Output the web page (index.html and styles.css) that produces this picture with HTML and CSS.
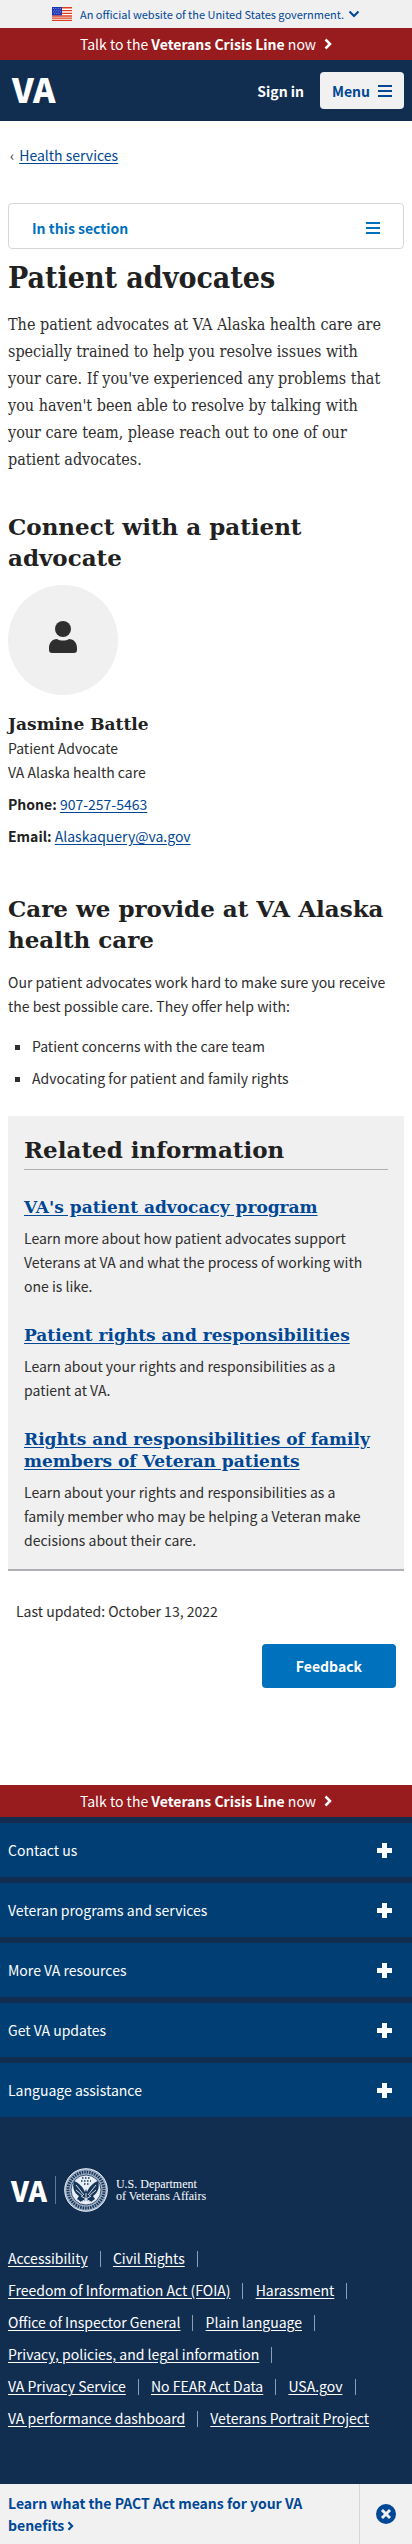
FILE: index.html
```html
<!DOCTYPE html>
<html lang="en">
<head>
<meta charset="utf-8">
<meta name="viewport" content="width=device-width, initial-scale=1">
<title>Patient advocates | VA Alaska health care</title>
<link rel="stylesheet" href="styles.css">
</head>
<body>
<header>
  <button class="gov-banner" type="button">
    <svg class="flag" viewBox="0 0 20 14" aria-hidden="true">
      <path fill="#fff" d="M0 0h20v14H0z"/>
      <path fill="#db3e1f" d="M0 0h20v1.5H0zM0 3h20v1.3H0zM0 5.7h20v1.4H0zM0 8.3h20v1.4H0zM0 10.6h20v1.2H0zM0 12.8h20V14H0z"/>
      <path fill="#1e33b1" d="M0 0h10v8.300H0z"/>
      <path stroke="#a5b0e8" stroke-width=".8" stroke-dasharray="1 1.300" d="M1 1.500h8M2 3.200h7M1 4.900h8M2 6.600h7"/>
    </svg>
    <span>An official website of the United States government.</span>
    <svg class="chevron-down" viewBox="0 0 12 8" aria-hidden="true"><path fill="none" stroke="currentColor" stroke-width="2" d="M1.500 1.500L6 6l4.500-4.500"/></svg>
  </button>
  <a class="crisis-line" href="#crisis">
    <span>Talk to the <strong>Veterans Crisis Line</strong> now</span>
    <svg class="chevron-right" viewBox="0 0 8 12" aria-hidden="true"><path fill="none" stroke="currentColor" stroke-width="2.500" d="M1.500 1.500L6 6l-4.500 4.500"/></svg>
  </a>
  <div class="site-header">
    <a class="logo" href="#home">VA</a>
    <button class="sign-in" type="button">Sign in</button>
    <button class="menu-button" type="button">
      <span>Menu</span>
      <svg class="bars" viewBox="0 0 14 12" aria-hidden="true"><path fill="currentColor" d="M0 0h14v2H0zM0 5h14v2H0zM0 10h14v2H0z"/></svg>
    </button>
  </div>
</header>

<main class="content">
  <nav class="breadcrumb" aria-label="Breadcrumb"><span class="breadcrumb-mark">‹</span><a href="#health-services">Health services</a></nav>
  <button class="section-nav" type="button">
    <span>In this section</span>
    <svg class="bars" viewBox="0 0 14 12" aria-hidden="true"><path fill="currentColor" d="M0 0h14v2H0zM0 5h14v2H0zM0 10h14v2H0z"/></svg>
  </button>

  <h1>Patient advocates</h1>
  <p class="intro">The patient advocates at VA Alaska health care are specially trained to help you resolve issues with your care. If you've experienced any problems that you haven't been able to resolve by talking with your care team, please reach out to one of our patient advocates.</p>

  <section class="contact">
    <h2>Connect with a patient advocate</h2>
    <div class="avatar">
      <svg class="person" viewBox="0 0 28 32" aria-hidden="true"><circle cx="14" cy="8" r="8" fill="currentColor"/><path fill="currentColor" d="M8 18c3 2 9 2 12 0 5 0 8 4 8 9v2q0 3-3 3H3q-3 0-3-3v-2c0-5 3-9 8-9z"/></svg>
    </div>
    <h3>Jasmine Battle</h3>
    <p>Patient Advocate</p>
    <p>VA Alaska health care</p>
    <p class="contact-row"><strong>Phone:</strong> <a href="tel:9072575463">907-257-5463</a></p>
    <p class="contact-row"><strong>Email:</strong> <a href="mailto:Alaskaquery@va.gov">Alaskaquery@va.gov</a></p>
  </section>

  <section class="care">
    <h2>Care we provide at VA Alaska health care</h2>
    <p>Our patient advocates work hard to make sure you receive the best possible care. They offer help with:</p>
    <ul>
      <li>Patient concerns with the care team</li>
      <li>Advocating for patient and family rights</li>
    </ul>
  </section>

  <section class="related">
    <h2>Related information</h2>
    <h3><a href="#program">VA's patient advocacy program</a></h3>
    <p>Learn more about how patient advocates support Veterans at VA and what the process of working with one is like.</p>
    <h3><a href="#rights">Patient rights and responsibilities</a></h3>
    <p>Learn about your rights and responsibilities as a patient at VA.</p>
    <h3><a href="#family">Rights and responsibilities of family members of Veteran patients</a></h3>
    <p>Learn about your rights and responsibilities as a family member who may be helping a Veteran make decisions about their care.</p>
  </section>

  <div class="page-end">
    <p>Last updated: October 13, 2022</p>
    <button class="feedback" type="button">Feedback</button>
  </div>
</main>

<footer>
  <a class="crisis-line" href="#crisis">
    <span>Talk to the <strong>Veterans Crisis Line</strong> now</span>
    <svg class="chevron-right" viewBox="0 0 8 12" aria-hidden="true"><path fill="none" stroke="currentColor" stroke-width="2.500" d="M1.500 1.500L6 6l-4.500 4.500"/></svg>
  </a>
  <div class="accordion">
    <button type="button"><span>Contact us</span><svg class="plus" viewBox="0 0 15 15" aria-hidden="true"><path fill="currentColor" d="M5 0h5v5h5v5h-5v5H5v-5H0V5h5z"/></svg></button>
    <button type="button"><span>Veteran programs and services</span><svg class="plus" viewBox="0 0 15 15" aria-hidden="true"><path fill="currentColor" d="M5 0h5v5h5v5h-5v5H5v-5H0V5h5z"/></svg></button>
    <button type="button"><span>More VA resources</span><svg class="plus" viewBox="0 0 15 15" aria-hidden="true"><path fill="currentColor" d="M5 0h5v5h5v5h-5v5H5v-5H0V5h5z"/></svg></button>
    <button type="button"><span>Get VA updates</span><svg class="plus" viewBox="0 0 15 15" aria-hidden="true"><path fill="currentColor" d="M5 0h5v5h5v5h-5v5H5v-5H0V5h5z"/></svg></button>
    <button type="button"><span>Language assistance</span><svg class="plus" viewBox="0 0 15 15" aria-hidden="true"><path fill="currentColor" d="M5 0h5v5h5v5h-5v5H5v-5H0V5h5z"/></svg></button>
  </div>
  <a class="footer-logo" href="#home">
    <span class="footer-mark">VA</span>
    <svg class="seal" viewBox="0 0 44 44" aria-hidden="true">
      <circle cx="22" cy="22" r="21.300" fill="#9eafc5" stroke="#e6edf5"/>
      <circle cx="22" cy="22" r="18" fill="none" stroke="#173559" stroke-width="3" stroke-dasharray="1.500 1"/>
      <circle cx="22" cy="22" r="15" fill="#e8eef5" stroke="#173559" stroke-width=".8"/>
      <path fill="#173559" d="M10 13c5 2 9 6 11 11l1-3 1 3c2-5 6-9 11-11 2 6 0 12-5 15l2 3-4 3-5-2-5 2-4-3 2-3c-5-3-7-9-5-15z"/>
      <path fill="none" stroke="#e8eef5" stroke-width=".9" d="M12 17l8 10M12 22l7 6M32 17l-8 10M32 22l-7 6M22 25v10M17 34l10-6M27 34l-10-6"/>
      <path fill="none" stroke="#173559" stroke-width="1.300" stroke-dasharray="1.500 1.500" d="M18 10h8M17 13h10M20 16h5"/>
    </svg>
    <span class="department">U.S. Department<br>of Veterans Affairs</span>
  </a>
  <ul class="footer-links">
    <li><a href="#accessibility">Accessibility</a></li>
    <li><a href="#civil">Civil Rights</a></li>
    <li><a href="#foia">Freedom of Information Act (FOIA)</a></li>
    <li><a href="#harassment">Harassment</a></li>
    <li><a href="#oig">Office of Inspector General</a></li>
    <li><a href="#plain">Plain language</a></li>
    <li><a href="#privacy">Privacy, policies, and legal information</a></li>
    <li><a href="#service">VA Privacy Service</a></li>
    <li><a href="#nofear">No FEAR Act Data</a></li>
    <li><a href="#usa">USA.gov</a></li>
    <li><a href="#performance">VA performance dashboard</a></li>
    <li><a href="#portrait">Veterans Portrait Project</a></li>
  </ul>
</footer>

<aside class="promo">
  <a href="#pact">Learn what the PACT Act means for your VA benefits <svg class="promo-chevron" viewBox="0 0 8 12" aria-hidden="true"><path fill="none" stroke="currentColor" stroke-width="2.500" d="M1.500 1.500L6 6l-4.500 4.500"/></svg></a>
  <button type="button" aria-label="Dismiss this announcement">
    <svg class="close" viewBox="0 0 20 20" aria-hidden="true"><circle cx="10" cy="10" r="10" fill="currentColor"/><path stroke="#f1f1f1" stroke-width="3" d="M6 6l8 8M14 6l-8 8"/></svg>
  </button>
</aside>
</body>
</html>
```

FILE: styles.css
```css
* { box-sizing: border-box; }

body {
  margin: 0;
  background: #fff;
  color: #2e2e2e;
  font: 14px/24px "Noto Sans CJK SC", "Noto Sans", sans-serif;
}

h1, h2, h3, p, ul { margin: 0; padding: 0; }

h1, h2, h3 { color: #212121; font-family: "DejaVu Serif", serif; }
h1, .intro { font-family: "DejaVu Serif Condensed", "DejaVu Serif", serif; }
h1 { margin-top: 11px; font-size: 30px; line-height: 36px; }
h2 { font-size: 23px; line-height: 31px; }
h3 { font-size: 17px; line-height: 22px; }

a { color: #004795; text-underline-offset: 2px; }
strong { color: #212121; }
button { margin: 0; padding: 0; border: 0; font: inherit; cursor: pointer; }
svg { display: block; flex: none; }

.gov-banner {
  display: flex;
  align-items: center;
  justify-content: center;
  width: 100%;
  height: 28px;
  background: #f0f0f0;
  color: #004795;
  font-size: 11px;
}
.flag { width: 20px; height: 14px; margin-right: 8px; }
.chevron-down { width: 12px; height: 8px; margin-left: 4px; }

.crisis-line {
  display: flex;
  align-items: center;
  justify-content: center;
  gap: 8px;
  height: 32px;
  background: #981b1e;
  color: #fff;
  text-decoration: none;
}
.crisis-line strong { color: #fff; }
.chevron-right { width: 8px; height: 12px; }

.site-header {
  display: flex;
  align-items: center;
  height: 61px;
  padding: 0 8px 0 12px;
  background: #112e51;
}
.logo {
  margin-right: auto;
  padding-bottom: 4px;
  color: #fff;
  font-size: 34px;
  font-weight: 900;
  line-height: 40px;
  text-decoration: none;
}
.sign-in { margin-right: 16px; background: none; color: #fff; font-weight: 700; }
.menu-button {
  display: flex;
  align-items: center;
  gap: 8px;
  height: 37px;
  padding: 0 12px;
  border-radius: 4px;
  background: #f1f1f1;
  color: #004795;
  font-weight: 700;
}
.bars { width: 14px; height: 12px; }

.content { padding: 22px 8px 97px; }
.breadcrumb { padding-left: 2px; }
.breadcrumb-mark { margin-right: 5px; }

.section-nav {
  display: flex;
  align-items: center;
  justify-content: space-between;
  width: 100%;
  height: 46px;
  margin-top: 36px;
  padding: 4px 23px 0;
  border: 1px solid #d6d7d9;
  border-radius: 4px;
  background: #fff;
  color: #0071bc;
  font-weight: 700;
}

.intro { margin-top: 15px; padding-right: 12px; font-size: 16px; line-height: 27px; }

.contact { margin-top: 38px; }
.avatar {
  display: flex;
  align-items: center;
  justify-content: center;
  width: 110px;
  height: 110px;
  margin: 12px 0 17px;
  padding-bottom: 6px;
  border-radius: 50%;
  background: #f0f0f0;
}
.person { width: 28px; height: 32px; }
.contact h3 { line-height: 24px; }
.contact-row { margin-top: 8px; }

.care { margin-top: 45px; }
.care p { margin-top: 15px; }
.care ul {
  display: grid;
  gap: 8px;
  margin-top: 16px;
  padding-left: 24px;
  list-style: square;
}

.related {
  margin-top: 26px;
  padding: 18px 16px 17px;
  border-bottom: 2px solid #aeb0b5;
  background: #f0f0f0;
}
.related h2 { padding-bottom: 4px; border-bottom: 1px solid #aeb0b5; }
.related h3 { margin-top: 26px; }
.related p { margin-top: 8px; padding-right: 12px; }

.page-end {
  display: flex;
  flex-direction: column;
  align-items: flex-start;
  gap: 21px;
  padding: 28px 8px 0;
}
.feedback {
  align-self: flex-end;
  height: 44px;
  padding: 0 34px;
  border-radius: 4px;
  background: #0071bc;
  color: #fff;
  font-weight: 700;
}

footer { padding-bottom: 50px; background: #112e51; }
.accordion { display: grid; gap: 6px; padding-top: 6px; }
.accordion button {
  display: flex;
  align-items: center;
  justify-content: space-between;
  height: 54px;
  padding: 0 20px 0 8px;
  background: #003e73;
  color: #fff;
}
.plus { width: 15px; height: 15px; }

.footer-logo {
  display: flex;
  align-items: center;
  margin: 51px 8px 30px;
  padding-left: 3px;
  color: #fff;
  text-decoration: none;
}
.footer-mark {
  padding-right: 8px;
  border-right: 1px solid #5f7896;
  font-size: 28px;
  font-weight: 900;
  line-height: 28px;
}
.seal { width: 44px; height: 44px; margin: 0 8px; }
.department { font: 12px/12px "Liberation Serif", serif; }

.footer-links { padding: 0 16px 0 8px; list-style: none; line-height: 32px; }
.footer-links li { display: inline-block; vertical-align: top; white-space: nowrap; }
.footer-links a { color: #fff; }
.footer-links li:not(:last-child)::after {
  content: "";
  display: inline-block;
  height: 16px;
  margin: 0 9px 0 12px;
  border-left: 1px solid #8aa0b9;
  vertical-align: -3px;
}

.promo { display: flex; background: #f1f1f1; }
.promo a {
  flex: 1;
  padding: 8px;
  font-weight: 700;
  line-height: 22px;
  text-decoration: none;
}
.promo-chevron { display: inline-block; width: 7px; height: 10px; }
.promo button {
  display: flex;
  align-items: center;
  justify-content: center;
  width: 53px;
  border-left: 1px solid #d6d7d9;
  background: none;
  color: #004795;
}
.close { width: 20px; height: 20px; }
```
